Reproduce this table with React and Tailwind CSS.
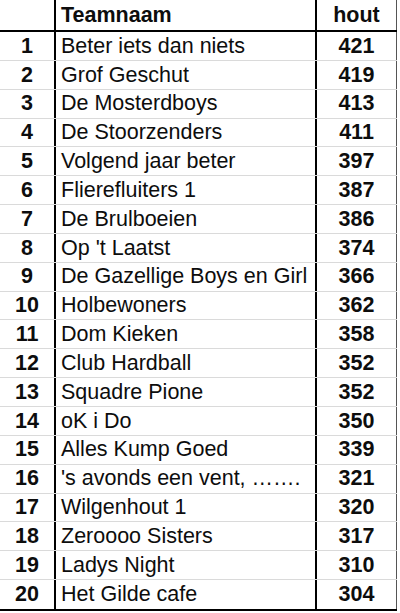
const rows = [
  [1, "Beter iets dan niets", 421],
  [2, "Grof Geschut", 419],
  [3, "De Mosterdboys", 413],
  [4, "De Stoorzenders", 411],
  [5, "Volgend jaar beter", 397],
  [6, "Flierefluiters 1", 387],
  [7, "De Brulboeien", 386],
  [8, "Op 't Laatst", 374],
  [9, "De Gazellige Boys en Girl", 366],
  [10, "Holbewoners", 362],
  [11, "Dom Kieken", 358],
  [12, "Club Hardball", 352],
  [13, "Squadre Pione", 352],
  [14, "oK i Do", 350],
  [15, "Alles Kump Goed", 339],
  [16, "'s avonds een vent, \u2026\u2026.", 321],
  [17, "Wilgenhout 1", 320],
  [18, "Zeroooo Sisters", 317],
  [19, "Ladys Night", 310],
  [20, "Het Gilde cafe", 304],
];

export default function App() {
  return (
    <div className="w-[400px] h-[613px] bg-white overflow-hidden" style={{ fontFamily: '"Liberation Sans", Arial, sans-serif' }}>
      <div className="w-[397px] text-[21.5px] leading-none text-[#0d0d0d]">
        <div className="flex h-[32px] border-b-2 border-black">
          <div className="w-[56px] border-r-2 border-black" />
          <div className="w-[261px] border-r-2 border-black flex items-center pl-[5px] pt-[1px] font-bold">Teamnaam</div>
          <div className="w-[80px] border-r border-[#555] flex items-center justify-center pt-[1px] font-bold">hout</div>
        </div>
        {rows.map(([n, name, score], i) => (
          <div
            key={n}
            className={
              i === rows.length - 1
                ? "flex h-[30.85px] border-b-2 border-black"
                : "flex h-[28.85px] border-b border-[#dadada]"
            }
          >
            <div className="w-[56px] border-r-2 border-black flex items-center justify-center pt-[1px] font-bold">{n}</div>
            <div className="w-[261px] border-r-2 border-black flex items-center pl-[5px] pt-[1px] whitespace-nowrap overflow-hidden">{name}</div>
            <div className="w-[80px] border-r border-[#555] flex items-center justify-center pt-[1px] font-bold">{score}</div>
          </div>
        ))}
      </div>
    </div>
  );
}
